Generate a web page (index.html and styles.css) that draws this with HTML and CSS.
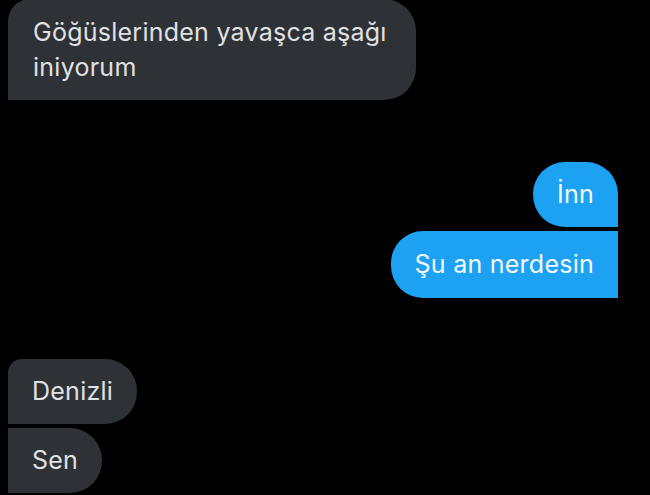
FILE: index.html
```html
<!DOCTYPE html>
<html lang="tr">
<head>
<meta charset="utf-8">
<link rel="stylesheet" href="styles.css">
</head>
<body>
<div class="chat">
  <div class="group in first">
    <div class="bubble in top-only">Göğüslerinden yavaşca aşağı<br>iniyorum</div>
  </div>
  <div class="group out second">
    <div class="bubble out o1">İnn</div>
    <div class="bubble out o2">Şu an nerdesin</div>
  </div>
  <div class="group in third">
    <div class="bubble in i1">Denizli</div>
    <div class="bubble in i2">Sen</div>
  </div>
</div>
</body>
</html>
```
FILE: styles.css
```css
html, body {
  margin: 0;
  padding: 0;
  background: #000;
  overflow: hidden;
}
.chat {
  width: 650px;
  height: 495px;
  display: flex;
  flex-direction: column;
  font-family: Inter, "Noto Sans", sans-serif;
  font-size: 25px;
  letter-spacing: 0.25px;
}
.group {
  display: flex;
  flex-direction: column;
  gap: 4px;
}
.group.in { align-items: flex-start; padding-left: 8px; }
.group.out { align-items: flex-end; padding-right: 32px; }
.first { margin-top: -1px; }
.second { margin-top: 62px; }
.third { margin-top: 61px; }
.bubble {
  padding: 16px 24px;
  line-height: 33px;
  border-radius: 32px;
}
.bubble.in {
  background: #2e3135;
  color: #e0e1e3;
}
.bubble.out {
  background: #1da1f2;
  color: #f4faff;
}
.top-only {
  border-radius: 22px 32px 32px 0;
  width: 358px;
  padding: 16px 25px 15px;
  line-height: 35px;
}
.o1 { border-bottom-right-radius: 0; }
.o2 { border-top-right-radius: 0; border-bottom-right-radius: 0; padding-top: 17px; padding-bottom: 17px; }
.i1 { border-top-left-radius: 14px; border-bottom-left-radius: 0; }
.i2 { border-top-left-radius: 0; border-bottom-left-radius: 0; }
```
